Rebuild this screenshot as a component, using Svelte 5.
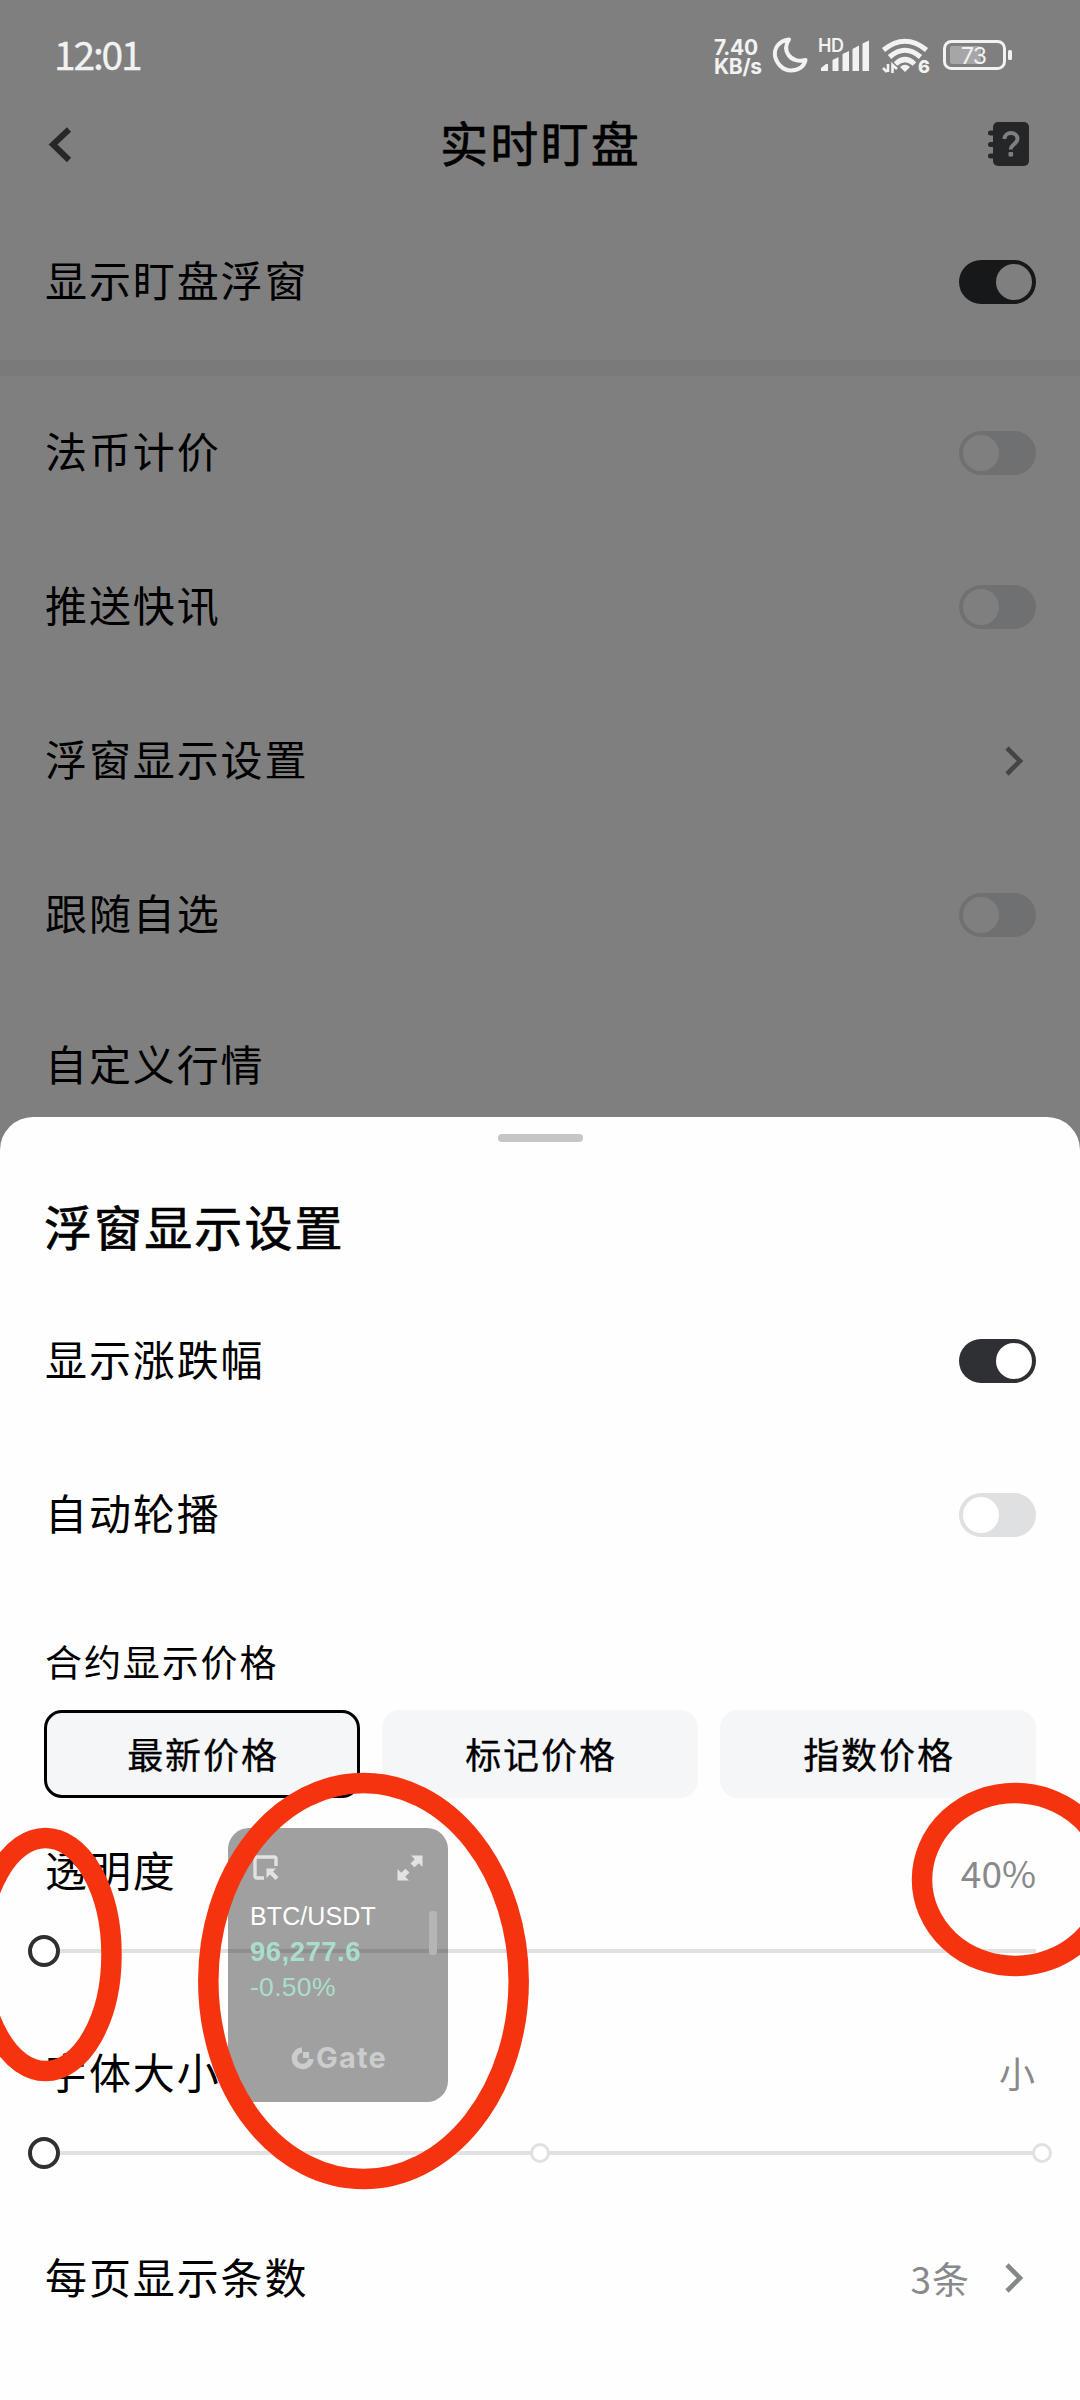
<script>
  let pageRows = $state([
    { label: '法币计价', on: false },
    { label: '推送快讯', on: false },
    { label: '浮窗显示设置', link: true },
    { label: '跟随自选', on: false }
  ]);

  let sheetRows = $state([
    { label: '显示涨跌幅', on: true },
    { label: '自动轮播', on: false }
  ]);

  let showFloat = $state(true);

  const prices = ['最新价格', '标记价格', '指数价格'];
  let price = $state('最新价格');

  const ticker = { pair: 'BTC/USDT', last: '96,277.6', change: '-0.50%' };
</script>

{#snippet toggle(on, flip)}
  <button class="toggle" class:on aria-label="toggle" onclick={flip}><i></i></button>
{/snippet}

{#snippet chevron()}
  <svg class="chevron" width="32" height="32" viewBox="0 0 32 32">
    <path d="M8 3 L21 16 L8 29" fill="none" stroke="#84888a" stroke-width="4.600" />
  </svg>
{/snippet}

<div class="screen">
  <div class="status">
    <span class="time">12:01</span>
    <div class="speed"><span>7.40</span><span>KB/s</span></div>
    <svg width="300" height="44" viewBox="770 33 300 44" fill="#f2f2f2">
      <path
        d="M789 39.500 C778 41 774 49 775 56 C777 65 784 70.500 791 70.500 C798 70.500 804 67 805.500 60 C799 62 792 60 788.500 55 C785 50 786 44 789 39.500 Z"
        fill="none" stroke="#f2f2f2" stroke-width="4" stroke-linejoin="round" />
      <text x="818" y="51.500" class="hd">HD</text>
      <path d="M821 71 V68 L826 64 H828 V71 Z M832.500 71 V60 L838.500 57 V71 Z M842.500 71 V54 L849 51 V71 Z M852.500 71 V49 L859 45.500 V71 Z M862.500 71 V43.500 L869 40.500 V71 Z" />
      <g fill="none" stroke="#f2f2f2" stroke-width="5">
        <path d="M883.500 50 Q905 32.500 926.500 50" />
        <path d="M889.500 57 Q905 43.500 920.500 57" />
        <path d="M895.500 64 Q905 55 914.500 64" />
      </g>
      <path d="M900 67 Q905 62.500 910 67 L905 72 Z" />
      <path d="M888 64 V72 M883 68 L887 72 M892.500 73 V65 L897 69" fill="none" stroke="#f2f2f2" stroke-width="2.600" />
      <text x="918" y="73" class="six">6</text>
      <rect x="950" y="46" width="31" height="18" rx="2" fill="#a6a6a6" />
      <rect x="944.500" y="41.500" width="60" height="27" rx="7" fill="none" stroke="#f2f2f2" stroke-width="3" />
      <rect x="1008" y="50" width="4" height="10" rx="1.500" />
      <text x="961" y="64" class="level">73</text>
    </svg>
  </div>

  <header>
    <svg width="32" height="44" viewBox="44 122 32 44">
      <path d="M69 129.500 L53 144.500 L69 160" fill="none" stroke="#4c4f51" stroke-width="6" />
    </svg>
    <h1>实时盯盘</h1>
    <svg width="42" height="44" viewBox="988 122 42 44">
      <rect x="993" y="122" width="36" height="44" rx="5" fill="#4a4c50" />
      <path d="M990.500 133 H994 M990.500 144.500 H994 M990.500 156 H994" stroke="#4a4c50" stroke-width="5" stroke-linecap="round" />
      <path d="M1004.500 139 C1004.500 131 1017.500 131 1017.500 139 C1017.500 144 1010.800 144 1010.800 149.500" fill="none" stroke="#fff" stroke-width="4" />
      <rect x="1008.500" y="152" width="4.600" height="4.600" rx="1" fill="#fff" />
    </svg>
  </header>

  <div class="row">
    <span>显示盯盘浮窗</span>
    {@render toggle(showFloat, () => (showFloat = !showFloat))}
  </div>
  <div class="divider"></div>
  {#each pageRows as row}
    <div class="row">
      <span>{row.label}</span>
      {#if row.link}
        {@render chevron()}
      {:else}
        {@render toggle(row.on, () => (row.on = !row.on))}
      {/if}
    </div>
  {/each}
  <div class="row last"><span>自定义行情</span></div>

  <div class="scrim"></div>

  <section class="sheet">
    <div class="grip"><div class="handle"></div></div>
    <h2>浮窗显示设置</h2>
    {#each sheetRows as row}
      <div class="row">
        <span>{row.label}</span>
        {@render toggle(row.on, () => (row.on = !row.on))}
      </div>
    {/each}

    <h3>合约显示价格</h3>
    <div class="prices">
      {#each prices as p}
        <button class:active={p === price} onclick={() => (price = p)}>{p}</button>
      {/each}
    </div>

    <div class="label opacity"><span>透明度</span><em>40%</em></div>
    <div class="slider"><i class="knob"></i></div>

    <div class="label size"><span>字体大小</span><em>小</em></div>
    <div class="slider">
      <i class="knob"></i>
      <i class="stop middle"></i>
      <i class="stop end"></i>
    </div>

    <div class="row count">
      <span>每页显示条数</span>
      <em>3条</em>
      {@render chevron()}
    </div>
  </section>

  <!-- floating ticker -->
  <div class="float">
    <div class="tools">
      <svg width="26" height="26" viewBox="0 0 26 26">
        <path d="M11 23 H4 Q2 23 2 21 V4 Q2 2 4 2 H21 Q23 2 23 4 V11" fill="none" stroke="#e2e2e2" stroke-width="3.400" />
        <path d="M13.500 13.500 H23 L20 16.500 L25.500 22 L22.500 25 L17 19.500 L13.500 23 Z" fill="#e2e2e2" />
      </svg>
      <svg width="26" height="26" viewBox="0 0 26 26" fill="#e2e2e2">
        <path d="M14 0.500 H25.500 V12 L21.800 8.300 L17.500 12.300 L13.500 8.500 L17.800 4.300 Z" />
        <path d="M12 25.500 H0.500 V14 L4.200 17.700 L8.500 13.700 L12.500 17.500 L8.200 21.700 Z" />
      </svg>
    </div>
    <div class="pair">{ticker.pair}</div>
    <div class="last-price">{ticker.last}</div>
    <div class="change">{ticker.change}</div>
    <div class="brand">
      <svg width="24" height="24" viewBox="0 0 24 24">
        <path d="M11 4 A8.300 8.300 0 1 0 20 13" fill="none" stroke="#cbcccc" stroke-width="5.600" />
        <rect x="12" y="6" width="6" height="6" fill="#cbcccc" />
      </svg>
      <span>Gate</span>
    </div>
    <i class="thumb"></i>
  </div>

  <!-- hand-drawn markers -->
  <svg class="marks" width="1080" height="2400" viewBox="0 0 1080 2400">
    <ellipse cx="45.500" cy="1954.500" rx="66" ry="116.500" />
    <ellipse cx="363.500" cy="1981" rx="155.200" ry="198" />
    <ellipse cx="1015" cy="1879.500" rx="93" ry="86.500" />
  </svg>
</div>

<style>
  :global(body) {
    background: #fff;
  }
  .screen {
    position: relative;
    width: 1080px;
    height: 2400px;
    overflow: hidden;
    background: #fff;
    color: #000;
    font-family: 'Noto Sans CJK SC', sans-serif;
  }
  h1, h2, h3 {
    margin: 0;
    font-weight: 400;
  }
  h1, h2 {
    -webkit-text-stroke: 0.700px #000;
  }
  em {
    font-style: normal;
    font-size: 36px;
    color: #87898b;
  }
  button {
    border: none;
    padding: 0;
    font-family: inherit;
  }

  .status {
    position: relative;
    z-index: 2;
    display: flex;
    align-items: center;
    height: 110px;
    padding: 0 10px 0 54px;
    color: #f2f2f2;
  }
  .time {
    flex: 1;
    padding-bottom: 5px;
    font-size: 39px;
    letter-spacing: -2.200px;
    -webkit-text-stroke: 0.300px #f2f2f2;
  }
  .speed {
    display: flex;
    flex-direction: column;
    width: 56px;
    margin-top: 3px;
    font: bold 21px/19px 'Inter', sans-serif;
    letter-spacing: -0.300px;
  }
  .hd {
    font: 600 18px 'Inter', sans-serif;
    letter-spacing: -0.500px;
  }
  .six {
    font: 800 18px 'Inter', sans-serif;
  }
  .level {
    font: 23px 'Inter', sans-serif;
    letter-spacing: -1px;
  }

  header {
    display: flex;
    align-items: center;
    height: 68px;
    padding: 0 50px 27px 44px;
  }
  h1 {
    flex: 1;
    padding: 0 0 6px 17px;
    text-align: center;
    font-size: 48px;
    letter-spacing: 2.200px;
  }

  .row {
    display: flex;
    align-items: center;
    justify-content: space-between;
    height: 154px;
    padding: 0 44px 0 45px;
    font-size: 42px;
    letter-spacing: 1.900px;
  }
  .row span {
    padding-bottom: 8px;
  }
  .row.last {
    height: 148px;
  }
  .divider {
    height: 16px;
    margin-top: 1px;
    background: #f4f4f4;
  }
  .chevron {
    margin-right: 5px;
  }
  .toggle {
    width: 77px;
    height: 44px;
    border-radius: 22px;
    background: #dfe0e2;
    display: flex;
    align-items: center;
    padding: 0 4px;
  }
  .toggle i {
    width: 36px;
    height: 36px;
    border-radius: 50%;
    background: #fff;
  }
  .toggle.on {
    background: #2e3033;
    justify-content: flex-end;
  }

  .scrim {
    position: absolute;
    inset: 0;
    background: rgba(0, 0, 0, 0.5);
  }
  .sheet {
    position: absolute;
    left: 0;
    right: 0;
    bottom: 0;
    height: 1283px;
    border-radius: 33px 33px 0 0;
    background: #fefefe;
  }
  .grip {
    padding-top: 17px;
  }
  .handle {
    width: 85px;
    height: 8px;
    margin: 0 auto;
    border-radius: 4px;
    background: #c4c6c8;
  }
  h2 {
    display: flex;
    align-items: center;
    height: 118px;
    padding: 24px 44px 0;
    font-size: 48px;
    letter-spacing: 2.100px;
  }
  h3 {
    display: flex;
    align-items: center;
    height: 99px;
    padding: 19px 45px 0;
    font-size: 37px;
    letter-spacing: 1.900px;
  }
  .prices {
    display: grid;
    grid-template-columns: repeat(3, 1fr);
    gap: 22px;
    padding: 0 44px;
  }
  .prices button {
    height: 88px;
    padding: 0 0 3px 2px;
    border-radius: 18px;
    background: #f4f6f8;
    color: #000;
    font-size: 36px;
    letter-spacing: 1.900px;
    -webkit-text-stroke: 0.300px #000;
  }
  .prices .active {
    border: 3px solid #000;
  }

  .label {
    display: flex;
    align-items: center;
    justify-content: space-between;
    padding: 0 44px 0 45px;
    font-size: 42px;
    letter-spacing: 1.900px;
  }
  .label em {
    letter-spacing: 0;
  }
  .opacity {
    height: 136px;
    padding-top: 2px;
  }
  .opacity em {
    margin-top: 8px;
    font-size: 37px;
  }
  .size {
    height: 135px;
    padding-top: 37px;
  }
  .size em {
    margin-top: 3px;
    padding-right: 1px;
  }
  .slider {
    position: relative;
    height: 30px;
    margin: 0 44px;
    background: linear-gradient(#e0e1e1, #e0e1e1) center / 100% 4px no-repeat;
  }
  .slider i {
    position: absolute;
    top: 50%;
    box-sizing: border-box;
    border-radius: 50%;
    background: #fff;
    transform: translate(-50%, -50%);
  }
  .knob {
    left: 0;
    width: 32px;
    height: 32px;
    border: 4px solid #2e3032;
  }
  .stop {
    width: 20px;
    height: 20px;
    border: 3px solid #e0e1e1;
  }
  .middle {
    left: 50%;
  }
  .end {
    left: calc(100% + 6px);
  }
  .row.count {
    height: 220px;
  }
  .count span {
    padding-bottom: 6px;
  }
  .count em {
    margin-left: auto;
    margin-right: 29px;
    padding-bottom: 1px;
    font-size: 37px;
    letter-spacing: 1px;
  }

  .float {
    position: absolute;
    left: 228px;
    top: 1828px;
    box-sizing: border-box;
    width: 220px;
    height: 274px;
    padding: 27px 25px 0 22px;
    border-radius: 21px;
    background: rgba(0, 0, 0, 0.37);
    font-family: 'Liberation Sans', sans-serif;
  }
  .tools {
    display: flex;
    justify-content: space-between;
    padding-left: 3px;
  }
  .pair {
    margin-top: 19px;
    font-size: 25px;
    line-height: 32px;
    letter-spacing: 0.100px;
    color: #fff;
  }
  .last-price {
    margin-top: 2px;
    font-size: 27.500px;
    font-weight: bold;
    line-height: 36px;
    letter-spacing: 0.500px;
    color: #a9dfca;
  }
  .change {
    font-size: 26.500px;
    line-height: 35px;
    letter-spacing: 0.300px;
    color: #a9dfca;
  }
  .brand {
    display: flex;
    align-items: center;
    gap: 1px;
    margin: 35px 0 0 41px;
    font: bold 29px/36px 'Inter', sans-serif;
    letter-spacing: 1.200px;
    color: #cbcccc;
  }
  .thumb {
    position: absolute;
    right: 11px;
    top: 83px;
    width: 8px;
    height: 44px;
    border-radius: 3px;
    background: #b3b6b5;
  }

  .marks {
    position: absolute;
    left: 0;
    top: 0;
    fill: none;
    stroke: #f5340f;
    stroke-width: 20.500px;
    pointer-events: none;
  }
</style>
